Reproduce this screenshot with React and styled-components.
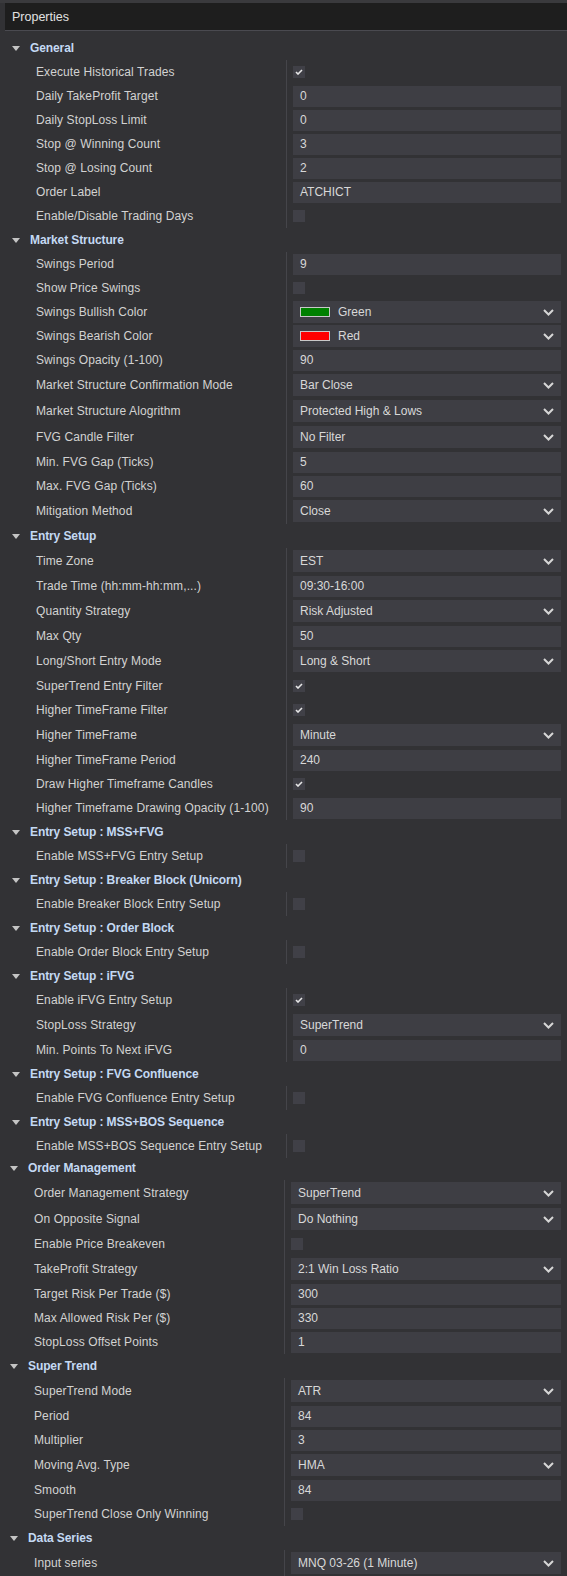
import React from 'react';
import styled, { createGlobalStyle } from 'styled-components';

const upper = [
  {
    title: 'General',
    rows: [
      { label: 'Execute Historical Trades', type: 'check', value: true },
      { label: 'Daily TakeProfit Target', type: 'text', value: '0' },
      { label: 'Daily StopLoss Limit', type: 'text', value: '0' },
      { label: 'Stop @ Winning Count', type: 'text', value: '3' },
      { label: 'Stop @ Losing Count', type: 'text', value: '2' },
      { label: 'Order Label', type: 'text', value: 'ATCHICT' },
      { label: 'Enable/Disable Trading Days', type: 'check', value: false },
    ],
  },
  {
    title: 'Market Structure',
    rows: [
      { label: 'Swings Period', type: 'text', value: '9' },
      { label: 'Show Price Swings', type: 'check', value: false },
      { label: 'Swings Bullish Color', type: 'color', value: 'Green', color: '#008000' },
      { label: 'Swings Bearish Color', type: 'color', value: 'Red', color: '#ff0000' },
      { label: 'Swings Opacity (1-100)', type: 'text', value: '90' },
      { label: 'Market Structure Confirmation Mode', type: 'select', value: 'Bar Close' },
      { label: 'Market Structure Alogrithm', type: 'select', value: 'Protected High & Lows' },
      { label: 'FVG Candle Filter', type: 'select', value: 'No Filter' },
      { label: 'Min. FVG Gap (Ticks)', type: 'text', value: '5' },
      { label: 'Max. FVG Gap (Ticks)', type: 'text', value: '60' },
      { label: 'Mitigation Method', type: 'select', value: 'Close' },
    ],
  },
  {
    title: 'Entry Setup',
    rows: [
      { label: 'Time Zone', type: 'select', value: 'EST' },
      { label: 'Trade Time (hh:mm-hh:mm,...)', type: 'text', value: '09:30-16:00' },
      { label: 'Quantity Strategy', type: 'select', value: 'Risk Adjusted' },
      { label: 'Max Qty', type: 'text', value: '50' },
      { label: 'Long/Short Entry Mode', type: 'select', value: 'Long & Short' },
      { label: 'SuperTrend Entry Filter', type: 'check', value: true },
      { label: 'Higher TimeFrame Filter', type: 'check', value: true },
      { label: 'Higher TimeFrame', type: 'select', value: 'Minute' },
      { label: 'Higher TimeFrame Period', type: 'text', value: '240' },
      { label: 'Draw Higher Timeframe Candles', type: 'check', value: true },
      { label: 'Higher Timeframe Drawing Opacity (1-100)', type: 'text', value: '90' },
    ],
  },
  {
    title: 'Entry Setup : MSS+FVG',
    rows: [{ label: 'Enable MSS+FVG Entry Setup', type: 'check', value: false }],
  },
  {
    title: 'Entry Setup : Breaker Block (Unicorn)',
    rows: [{ label: 'Enable Breaker Block Entry Setup', type: 'check', value: false }],
  },
  {
    title: 'Entry Setup : Order Block',
    rows: [{ label: 'Enable Order Block Entry Setup', type: 'check', value: false }],
  },
  {
    title: 'Entry Setup : iFVG',
    rows: [
      { label: 'Enable iFVG Entry Setup', type: 'check', value: true },
      { label: 'StopLoss Strategy', type: 'select', value: 'SuperTrend' },
      { label: 'Min. Points To Next iFVG', type: 'text', value: '0' },
    ],
  },
  {
    title: 'Entry Setup : FVG Confluence',
    rows: [{ label: 'Enable FVG Confluence Entry Setup', type: 'check', value: false }],
  },
  {
    title: 'Entry Setup : MSS+BOS Sequence',
    rows: [{ label: 'Enable MSS+BOS Sequence Entry Setup', type: 'check', value: false }],
  },
];

const lower = [
  {
    title: 'Order Management',
    rows: [
      { label: 'Order Management Strategy', type: 'select', value: 'SuperTrend' },
      { label: 'On Opposite Signal', type: 'select', value: 'Do Nothing' },
      { label: 'Enable Price Breakeven', type: 'check', value: false },
      { label: 'TakeProfit Strategy', type: 'select', value: '2:1 Win Loss Ratio' },
      { label: 'Target Risk Per Trade ($)', type: 'text', value: '300' },
      { label: 'Max Allowed Risk Per ($)', type: 'text', value: '330' },
      { label: 'StopLoss Offset Points', type: 'text', value: '1' },
    ],
  },
  {
    title: 'Super Trend',
    rows: [
      { label: 'SuperTrend Mode', type: 'select', value: 'ATR' },
      { label: 'Period', type: 'text', value: '84' },
      { label: 'Multiplier', type: 'text', value: '3' },
      { label: 'Moving Avg. Type', type: 'select', value: 'HMA' },
      { label: 'Smooth', type: 'text', value: '84' },
      { label: 'SuperTrend Close Only Winning', type: 'check', value: false },
    ],
  },
  {
    title: 'Data Series',
    rows: [{ label: 'Input series', type: 'select', value: 'MNQ 03-26 (1 Minute)' }],
  },
];

function Chevron() {
  return (
    <svg width="11" height="7" viewBox="0 0 11 7">
      <path d="M1 1 L5.5 5.5 L10 1" fill="none" stroke="#d6d6d6" strokeWidth="2" />
    </svg>
  );
}

function Check() {
  return (
    <svg width="8" height="6" viewBox="0 0 8 6">
      <path d="M1 3 L3 5 L7 1" fill="none" stroke="#e6e6e6" strokeWidth="1.6" />
    </svg>
  );
}

function Value({ row }) {
  if (row.type === 'check') {
    return <CheckBox>{row.value && <Check />}</CheckBox>;
  }
  if (row.type === 'text') {
    return <Field>{row.value}</Field>;
  }
  return (
    <Field $select>
      {row.type === 'color' && <Swatch $color={row.color} />}
      <span>{row.value}</span>
      <Arrow><Chevron /></Arrow>
    </Field>
  );
}

function Section({ section }) {
  return (
    <Group>
      <Header>
        <Triangle />
        {section.title}
      </Header>
      {section.rows.map((row) => (
        <Row key={row.label} $tall={row.type === 'select'}>
          <Label>{row.label}</Label>
          <Cell>
            <Value row={row} />
          </Cell>
        </Row>
      ))}
    </Group>
  );
}

export default function App() {
  return (
    <Window>
      <GlobalStyle />
      <TitleBar>Properties</TitleBar>
      <Body>
        {upper.map((s) => (
          <Section key={s.title} section={s} />
        ))}
        <Shifted>
          {lower.map((s) => (
            <Section key={s.title} section={s} />
          ))}
        </Shifted>
      </Body>
    </Window>
  );
}

const GlobalStyle = createGlobalStyle`
  html, body {
    margin: 0;
    padding: 0;
    background: #323235;
  }
  body {
    font-family: "Liberation Sans", Arial, sans-serif;
    font-size: 12px;
    color: #d4d4d4;
  }
`;

const Window = styled.div`
  min-height: 100vh;
  border-top: 3px solid #3a3a3d;
  box-sizing: border-box;
  background: #323235;
`;

const TitleBar = styled.div`
  height: 27px;
  margin-left: 5px;
  padding-left: 7px;
  display: flex;
  align-items: center;
  background: #1e1e1e;
  border-bottom: 1px solid #4a4a50;
  font-size: 12.5px;
  color: #e2e2e2;
`;

const Body = styled.div`
  padding-top: 5px;
  padding-bottom: 8px;
`;

const Shifted = styled.div`
  margin: -2px 0 0 -2px;
`;

const Group = styled.div`
  display: flex;
  flex-direction: column;
`;

const Header = styled.div`
  height: 24px;
  display: flex;
  align-items: center;
  padding-left: 12px;
  font-weight: bold;
  letter-spacing: -0.1px;
  color: #c4d9f3;
`;

const Triangle = styled.span`
  width: 0;
  height: 0;
  margin-right: 10px;
  border-left: 4.5px solid transparent;
  border-right: 4.5px solid transparent;
  border-top: 5px solid #c4c4c4;
`;

const Row = styled.div`
  display: grid;
  grid-template-columns: 287px 1fr;
  height: ${(p) => (p.$tall ? '26px' : '24px')};
`;

const Label = styled.div`
  display: flex;
  align-items: center;
  padding-left: 36px;
  border-right: 1px solid #45454a;
  white-space: nowrap;
  letter-spacing: 0.1px;
  color: #d2d2d2;
`;

const Cell = styled.div`
  display: flex;
  align-items: center;
  padding: 0 6px;
`;

const Field = styled.div`
  flex: 1;
  height: ${(p) => (p.$select ? '22px' : '21px')};
  display: flex;
  align-items: center;
  padding: 0 7px;
  background: #3e3e44;
  color: #d8d8d8;
  white-space: nowrap;
`;

const Arrow = styled.span`
  margin-left: auto;
  display: flex;
  align-items: center;
`;

const Swatch = styled.span`
  width: 28px;
  height: 8px;
  margin-right: 8px;
  border: 1px solid #c8c8c8;
  background: ${(p) => p.$color};
`;

const CheckBox = styled.div`
  width: 12px;
  height: 12px;
  background: #404047;
  display: flex;
  align-items: center;
  justify-content: center;
`;
